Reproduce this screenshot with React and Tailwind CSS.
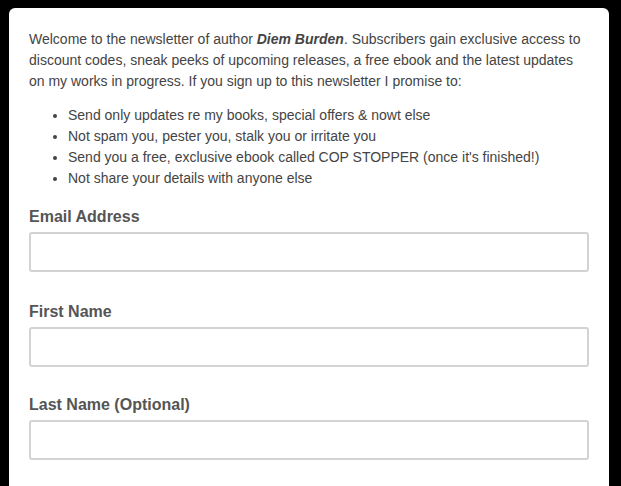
export default function App() {
  const items = [
    "Send only updates re my books, special offers & nowt else",
    "Not spam you, pester you, stalk you or irritate you",
    "Send you a free, exclusive ebook called COP STOPPER (once it's finished!)",
    "Not share your details with anyone else",
  ];
  const fields = [
    ["Email Address", "mb-[29px]"],
    ["First Name", "mb-[27px]"],
    ["Last Name (Optional)", ""],
  ];
  return (
    <div className="h-[486px] w-[621px] overflow-hidden bg-black pt-2 pl-[9px]" style={{ fontFamily: '"Liberation Sans", Arial, sans-serif' }}>
      <div className="w-[600px] h-[520px] rounded-[6px] bg-white px-5 pt-[21px]">
        <p className="text-[14px] leading-[21px] text-[#444]">
          Welcome to the newsletter of author <b><i>Diem Burden</i></b>. Subscribers gain exclusive access to discount codes, sneak peeks of upcoming releases, a free ebook and the latest updates on my works in progress. If you sign up to this newsletter I promise to:
        </p>
        <ul className="mt-[13px] list-disc pl-[39px] text-[14px] leading-[21px] text-[#444]">
          {items.map((t) => (
            <li key={t}>{t}</li>
          ))}
        </ul>
        <div className="mt-[17px] flex flex-col">
          {fields.map(([f, mb]) => (
            <div key={f} className={"flex flex-col " + mb}>
              <label className="text-[16px] leading-[22px] font-bold text-[#555]">{f}</label>
              <input type="text" className="mt-[4px] h-[40px] w-[560px] rounded-[3px] border-2 border-[#d3d3d3] bg-white outline-none" />
            </div>
          ))}
        </div>
      </div>
    </div>
  );
}
